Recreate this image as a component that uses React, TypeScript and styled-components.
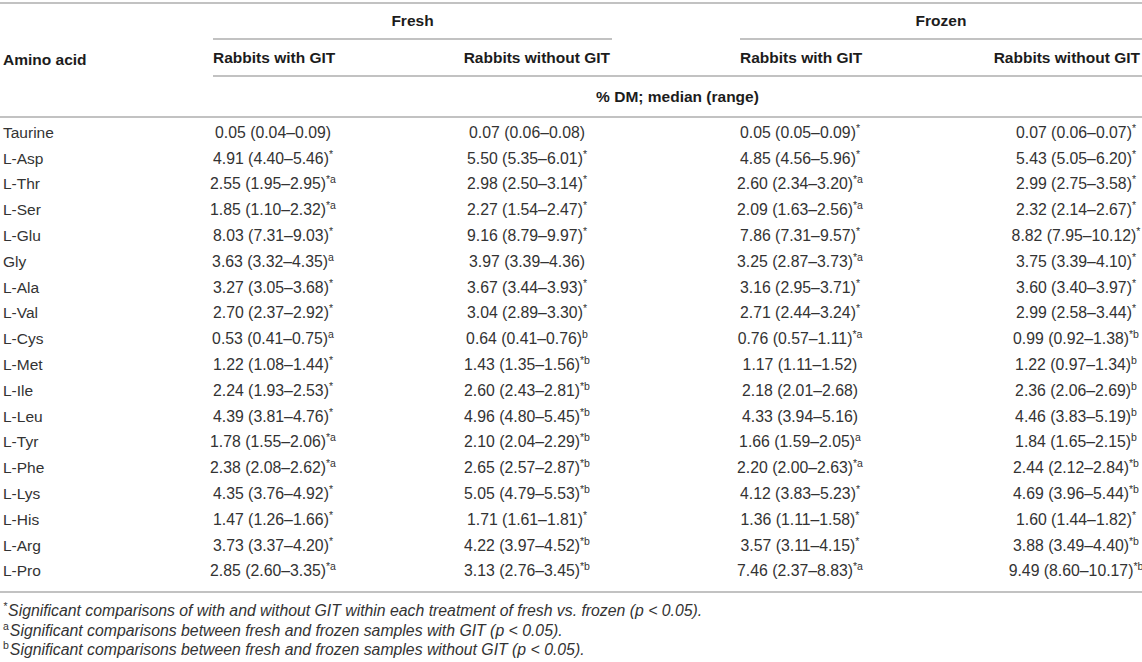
import React, { FC } from 'react'
import styled, { createGlobalStyle } from 'styled-components'

const GlobalStyle = createGlobalStyle`
  body {
    margin: 0;
    background: #ffffff;
    font-family: 'Liberation Sans', Arial, Helvetica, sans-serif;
    color: #333333;
  }
`

const COLS = '213px 120px 109px 170px 128px 120px 150px 132px'
const RULE = '#c2c2c2'

interface AlignProps {
  $align?: 'left' | 'center' | 'right'
}

interface ColProps {
  $col: string
}

interface SpanProps extends ColProps, AlignProps {
  $row?: string
  $rule?: boolean
}

const Page = styled.div`
  padding-top: 2px;
  width: 1142px;
`

const Head = styled.div`
  display: grid;
  grid-template-columns: ${COLS};
  grid-template-rows: 36px 37px 39px;
  border-top: 2px solid ${RULE};
  border-bottom: 2px solid ${RULE};
  box-sizing: border-box;
`

const HeadCell = styled.div<SpanProps>`
  grid-column: ${({ $col }) => $col};
  grid-row: ${({ $row }) => $row || 'auto'};
  display: flex;
  align-items: center;
  justify-content: ${({ $align }) =>
    $align === 'left' ? 'flex-start' : $align === 'right' ? 'flex-end' : 'center'};
  font-weight: bold;
  font-size: 15.5px;
  color: #1c1c1c;
  white-space: nowrap;
  box-sizing: border-box;
  padding-right: ${({ $align }) => ($align === 'right' ? '2px' : '0')};
  ${({ $rule }) => $rule && `border-bottom: 2px solid ${RULE};`}
`

const NameHead = styled(HeadCell)`
  padding-left: 3px;
`

const Body = styled.div`
  display: grid;
  grid-template-columns: ${COLS};
  grid-auto-rows: 25.8px;
  padding: 2px 0 7px;
  border-bottom: 2px solid ${RULE};
`

const NameCell = styled.div`
  grid-column: 1;
  display: flex;
  align-items: center;
  padding-left: 3px;
  font-size: 15.5px;
  color: #333333;
`

const ValueCell = styled.div<ColProps>`
  grid-column: ${({ $col }) => $col};
  display: flex;
  align-items: center;
  justify-content: center;
  font-size: 15.8px;
  color: #333333;
  white-space: nowrap;
`

const Sup = styled.sup`
  font-size: 10.5px;
  line-height: 0;
  vertical-align: 0;
  position: relative;
  top: -6px;
`

const Notes = styled.div`
  padding: 8px 0 0 3px;
  display: flex;
  flex-direction: column;
`

const Note = styled.div`
  font-style: italic;
  font-size: 15.8px;
  line-height: 19.5px;
  color: #333333;
  white-space: nowrap;
`

const NoteMark = styled.sup<{ $upright?: boolean }>`
  font-size: 10.5px;
  line-height: 0;
  font-style: ${({ $upright }) => ($upright ? 'normal' : 'italic')};
  vertical-align: 0;
  position: relative;
  top: -6px;
  margin-right: 1px;
`

const rows: [string, string, string, string, string][] = [
  ['Taurine', '0.05 (0.04–0.09)', '0.07 (0.06–0.08)', '0.05 (0.05–0.09)*', '0.07 (0.06–0.07)*'],
  ['L-Asp', '4.91 (4.40–5.46)*', '5.50 (5.35–6.01)*', '4.85 (4.56–5.96)*', '5.43 (5.05–6.20)*'],
  ['L-Thr', '2.55 (1.95–2.95)*a', '2.98 (2.50–3.14)*', '2.60 (2.34–3.20)*a', '2.99 (2.75–3.58)*'],
  ['L-Ser', '1.85 (1.10–2.32)*a', '2.27 (1.54–2.47)*', '2.09 (1.63–2.56)*a', '2.32 (2.14–2.67)*'],
  ['L-Glu', '8.03 (7.31–9.03)*', '9.16 (8.79–9.97)*', '7.86 (7.31–9.57)*', '8.82 (7.95–10.12)*'],
  ['Gly', '3.63 (3.32–4.35)a', '3.97 (3.39–4.36)', '3.25 (2.87–3.73)*a', '3.75 (3.39–4.10)*'],
  ['L-Ala', '3.27 (3.05–3.68)*', '3.67 (3.44–3.93)*', '3.16 (2.95–3.71)*', '3.60 (3.40–3.97)*'],
  ['L-Val', '2.70 (2.37–2.92)*', '3.04 (2.89–3.30)*', '2.71 (2.44–3.24)*', '2.99 (2.58–3.44)*'],
  ['L-Cys', '0.53 (0.41–0.75)a', '0.64 (0.41–0.76)b', '0.76 (0.57–1.11)*a', '0.99 (0.92–1.38)*b'],
  ['L-Met', '1.22 (1.08–1.44)*', '1.43 (1.35–1.56)*b', '1.17 (1.11–1.52)', '1.22 (0.97–1.34)b'],
  ['L-Ile', '2.24 (1.93–2.53)*', '2.60 (2.43–2.81)*b', '2.18 (2.01–2.68)', '2.36 (2.06–2.69)b'],
  ['L-Leu', '4.39 (3.81–4.76)*', '4.96 (4.80–5.45)*b', '4.33 (3.94–5.16)', '4.46 (3.83–5.19)b'],
  ['L-Tyr', '1.78 (1.55–2.06)*a', '2.10 (2.04–2.29)*b', '1.66 (1.59–2.05)a', '1.84 (1.65–2.15)b'],
  ['L-Phe', '2.38 (2.08–2.62)*a', '2.65 (2.57–2.87)*b', '2.20 (2.00–2.63)*a', '2.44 (2.12–2.84)*b'],
  ['L-Lys', '4.35 (3.76–4.92)*', '5.05 (4.79–5.53)*b', '4.12 (3.83–5.23)*', '4.69 (3.96–5.44)*b'],
  ['L-His', '1.47 (1.26–1.66)*', '1.71 (1.61–1.81)*', '1.36 (1.11–1.58)*', '1.60 (1.44–1.82)*'],
  ['L-Arg', '3.73 (3.37–4.20)*', '4.22 (3.97–4.52)*b', '3.57 (3.11–4.15)*', '3.88 (3.49–4.40)*b'],
  ['L-Pro', '2.85 (2.60–3.35)*a', '3.13 (2.76–3.45)*b', '7.46 (2.37–8.83)*a', '9.49 (8.60–10.17)*b'],
]

const valueCols = ['2', '4', '6', '8']

const Value: FC<{ text: string; col: string }> = ({ text, col }) => {
  const cut = text.lastIndexOf(')') + 1
  const main = text.slice(0, cut)
  const mark = text.slice(cut)
  return (
    <ValueCell $col={col}>
      <span>
        {main}
        {mark && <Sup>{mark}</Sup>}
      </span>
    </ValueCell>
  )
}

const App: FC = () => (
  <Page>
    <GlobalStyle />
    <Head>
      <NameHead $col="1" $row="1 / 4" $align="left">
        Amino acid
      </NameHead>
      <HeadCell $col="2 / 5" $row="1" $rule>
        Fresh
      </HeadCell>
      <HeadCell $col="6 / 9" $row="1" $rule>
        Frozen
      </HeadCell>

      <HeadCell $col="2" $row="2" $align="left" $rule>
        Rabbits with GIT
      </HeadCell>
      <HeadCell $col="3" $row="2" $rule />
      <HeadCell $col="4" $row="2" $align="right" $rule>
        Rabbits without GIT
      </HeadCell>
      <HeadCell $col="5" $row="2" $rule />
      <HeadCell $col="6" $row="2" $align="left" $rule>
        Rabbits with GIT
      </HeadCell>
      <HeadCell $col="7" $row="2" $rule />
      <HeadCell $col="8" $row="2" $align="right" $rule>
        Rabbits without GIT
      </HeadCell>

      <HeadCell $col="2 / 9" $row="3">
        % DM; median (range)
      </HeadCell>
    </Head>

    <Body>
      {rows.map(([name, ...vals]) => (
        <React.Fragment key={name}>
          <NameCell>{name}</NameCell>
          {vals.map((v, i) => (
            <Value key={i} text={v} col={valueCols[i]} />
          ))}
        </React.Fragment>
      ))}
    </Body>

    <Notes>
      <Note>
        <NoteMark>*</NoteMark>Significant comparisons of with and without GIT within each treatment of fresh vs.
        frozen (p &lt; 0.05).
      </Note>
      <Note>
        <NoteMark $upright>a</NoteMark>Significant comparisons between fresh and frozen samples with GIT (p &lt; 0.05).
      </Note>
      <Note>
        <NoteMark $upright>b</NoteMark>Significant comparisons between fresh and frozen samples without GIT (p &lt;
        0.05).
      </Note>
    </Notes>
  </Page>
)

export default App
